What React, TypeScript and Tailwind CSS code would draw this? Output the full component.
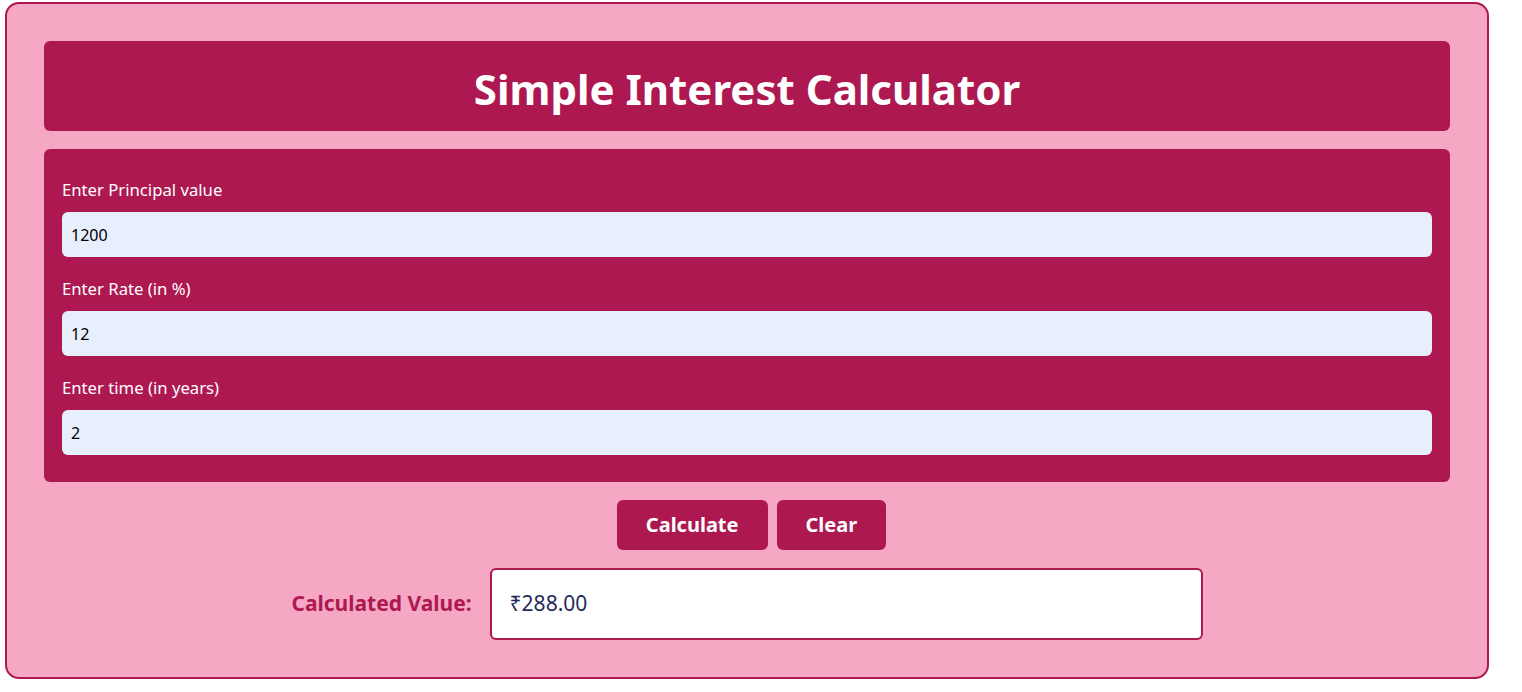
import { useState } from 'react';

const fields = [
  { key: 'p', label: 'Enter Principal value' },
  { key: 'r', label: 'Enter Rate (in %)' },
  { key: 't', label: 'Enter time (in years)' },
] as const;

export default function App() {
  const [vals, setVals] = useState<Record<string, string>>({ p: '1200', r: '12', t: '2' });
  const [result, setResult] = useState('₹288.00');

  const calculate = () => {
    const si = (Number(vals.p) * Number(vals.r) * Number(vals.t)) / 100;
    setResult('₹' + si.toFixed(2));
  };

  return (
    <div className="bg-white min-h-[692px] pt-[2px] pl-[5px] font-['Noto_Sans',sans-serif]">
      <div className="w-[1484px] h-[677px] bg-[#f6a7c3] border-2 border-[#ad1850] rounded-[14px] px-[37px] pt-[37px]">
        {/* Heading */}
        <div className="h-[90px] bg-[#ad1850] rounded-[6px] flex items-center justify-center pt-[5px]">
          <h1 className="text-white text-[42px] font-bold leading-none">Simple Interest Calculator</h1>
        </div>

        {/* Inputs */}
        <div className="mt-[18px] bg-[#ad1850] rounded-[6px] px-[18px] pt-[30px] pb-[27px]">
          {fields.map((f, i) => (
            <div key={f.key} className={i > 0 ? 'mt-[21px]' : ''}>
              <label className="block text-white text-[16.7px] leading-[22px] mb-[11px]">{f.label}</label>
              <input
                className="w-full h-[45px] bg-[#e8effc] rounded-[6px] px-[9px] text-[16px] text-black outline-none"
                value={vals[f.key]}
                onChange={(e) => setVals({ ...vals, [f.key]: e.target.value })}
              />
            </div>
          ))}
        </div>

        {/* Buttons */}
        <div className="mt-[18px] flex justify-center gap-[9px] pl-[9px]">
          <button
            onClick={calculate}
            className="h-[50px] px-[29px] bg-[#ad1850] text-white text-[20px] font-bold rounded-[6px]"
          >
            Calculate
          </button>
          <button
            onClick={() => {
              setVals({ p: '', r: '', t: '' });
              setResult('');
            }}
            className="h-[50px] px-[29px] bg-[#ad1850] text-white text-[20px] font-bold rounded-[6px]"
          >
            Clear
          </button>
        </div>

        {/* Result */}
        <div className="mt-[18px] flex items-center justify-center gap-[18px]">
          <span className="text-[#ad1850] text-[21px] font-bold">Calculated Value:</span>
          <div className="w-[713px] h-[72px] bg-white border-2 border-[#ad1850] rounded-[6px] flex items-center px-[18px] text-[21px] text-[#1f2a5a]">
            {result}
          </div>
        </div>
      </div>
    </div>
  );
}
